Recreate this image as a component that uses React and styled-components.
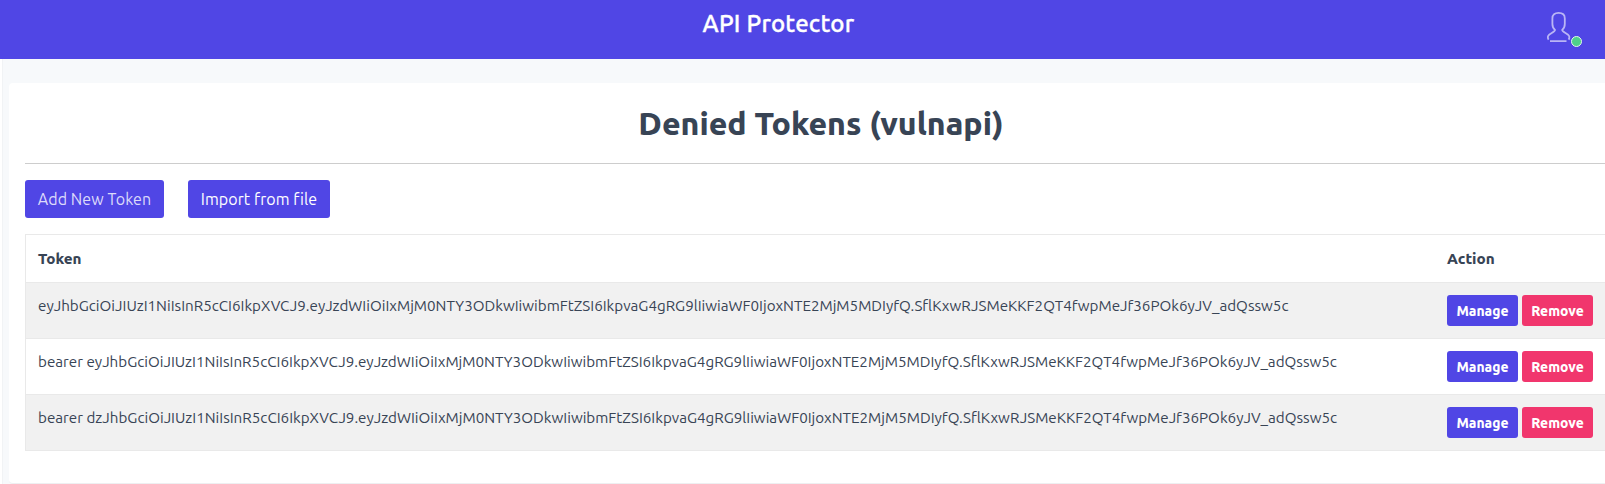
import React from "react";
import styled, { createGlobalStyle } from "styled-components";

const GlobalStyle = createGlobalStyle`
  *, *::before, *::after { box-sizing: border-box; }
  html, body { margin: 0; height: 484px; overflow: hidden; }
  body {
    background: #fff;
    color: #384455;
    font-family: Ubuntu, "Noto Sans", "Open Sans", sans-serif;
  }
`;

const Page = styled.div`
  height: 484px;
  overflow: hidden;
`;

const Header = styled.header`
  display: grid;
  grid-template-columns: 1fr auto 1fr;
  height: 59px;
  padding: 0 22px 0 0;
  background: #5046e5;
`;

const Brand = styled.div`
  grid-column: 2;
  margin: 8px 0 0 -26px;
  color: #fff;
  font-size: 24px;
  font-weight: 500;
  line-height: 32px;
  letter-spacing: 0.2px;
  -webkit-text-stroke: 0.35px #fff;
  white-space: nowrap;
`;

const Avatar = styled.div`
  position: relative;
  justify-self: end;
  width: 36px;
  height: 36px;
  margin-top: 11px;
`;

const StatusDot = styled.span`
  position: absolute;
  right: 1px;
  bottom: 0;
  width: 11px;
  height: 11px;
  border: 1px solid #e3f8ec;
  border-radius: 50%;
  background: #4fd08a;
`;

const Main = styled.main`
  height: 425px;
  margin-left: 2px;
  padding: 24px 0 0 7px;
  background: #f7f9fb;
  box-shadow: inset 1px 0 0 #f1f3f5;
`;

const Card = styled.section`
  width: 1624px;
  height: 401px;
  padding: 0 16px;
  border-bottom: 1px solid #eeeff1;
  border-radius: 4px;
  background: #fff;
`;

const Title = styled.h1`
  height: 81px;
  margin: 0;
  padding-top: 16px;
  border-bottom: 1px solid #cdcdcd;
  font-size: 32px;
  font-weight: 800;
  line-height: 48px;
  text-align: center;
`;

const Toolbar = styled.div`
  display: flex;
  gap: 24px;
  padding: 16px 0;
`;

const Button = styled.button`
  width: ${(p) => p.$width}px;
  height: 38px;
  padding: 0;
  border: 0;
  border-radius: 3px;
  background: #5046e5;
  color: ${(p) => (p.$muted ? "#dcdafa" : "#fff")};
  font: 400 16px/38px Ubuntu, "Noto Sans", sans-serif;
  letter-spacing: 0.08px;
  white-space: nowrap;
`;

const Table = styled.div`
  border: 1px solid #e9e9e9;
`;

const Row = styled.div`
  display: grid;
  grid-template-columns: 1409px 1fr;
  height: ${(p) => (p.$head ? 47 : 56)}px;
  border-top: ${(p) => (p.$head ? 0 : 1)}px solid #e9e9e9;
  background: ${(p) => (p.$striped ? "#f1f1f1" : "#fff")};
`;

const HeadCell = styled.div`
  padding: 0 12px;
  font-size: 15.2px;
  font-weight: 800;
  line-height: 47px;
`;

const TokenCell = styled.div`
  padding: 12px 12px 0;
  font-size: 15.2px;
  line-height: 22px;
  white-space: nowrap;
`;

const ActionCell = styled.div`
  display: flex;
  gap: 4px;
  padding: 12px 12px 0;
`;

const ActionButton = styled.button`
  width: 71px;
  height: 31px;
  padding: 0;
  border: 0;
  border-radius: 3px;
  background: ${(p) => (p.$danger ? "#f1366d" : "#5046e5")};
  color: #fff;
  font: 800 13.8px/32px Ubuntu, "Noto Sans", sans-serif;
`;

const JWT =
  "JhbGciOiJIUzI1NiIsInR5cCI6IkpXVCJ9.eyJzdWIiOiIxMjM0NTY3ODkwIiwibmFtZSI6IkpvaG4gRG9lIiwiaWF0IjoxNTE2MjM5MDIyfQ.SflKxwRJSMeKKF2QT4fwpMeJf36POk6yJV_adQssw5c";
const tokens = ["ey" + JWT, "bearer ey" + JWT, "bearer dz" + JWT];

export default function App() {
  return (
    <Page>
      <GlobalStyle />
      <Header>
        <Brand>API Protector</Brand>
        <Avatar>
          <svg width="24" height="32" viewBox="0 0 24 32" fill="none" stroke="#b9b5f5" strokeWidth="1.8">
            <path d="M3 30.1H19.5M1.6 28.6C0.8 27.6 0.8 26 1.1 25C2.2 22.6 8 21 8 18.9C6.2 17.4 5.4 15.4 5.4 13V7.4C5.4 3.6 7.8 1.9 11.6 1.9S17.8 3.6 17.8 7.4V13C17.8 15.4 17 17.4 15.2 18.9C15.2 21 21 22.6 22.1 25C22.4 26 22.4 27.6 21.6 28.6" />
          </svg>
          <StatusDot />
        </Avatar>
      </Header>
      <Main>
        <Card>
          <Title>Denied Tokens (vulnapi)</Title>
          <Toolbar>
            <Button $width={139} $muted>Add New Token</Button>
            <Button $width={142}>Import from file</Button>
          </Toolbar>
          <Table>
            <Row $head>
              <HeadCell>Token</HeadCell>
              <HeadCell>Action</HeadCell>
            </Row>
            {tokens.map((token, i) => (
              <Row key={token} $striped={i % 2 === 0}>
                <TokenCell>{token}</TokenCell>
                <ActionCell>
                  <ActionButton>Manage</ActionButton>
                  <ActionButton $danger>Remove</ActionButton>
                </ActionCell>
              </Row>
            ))}
          </Table>
        </Card>
      </Main>
    </Page>
  );
}
